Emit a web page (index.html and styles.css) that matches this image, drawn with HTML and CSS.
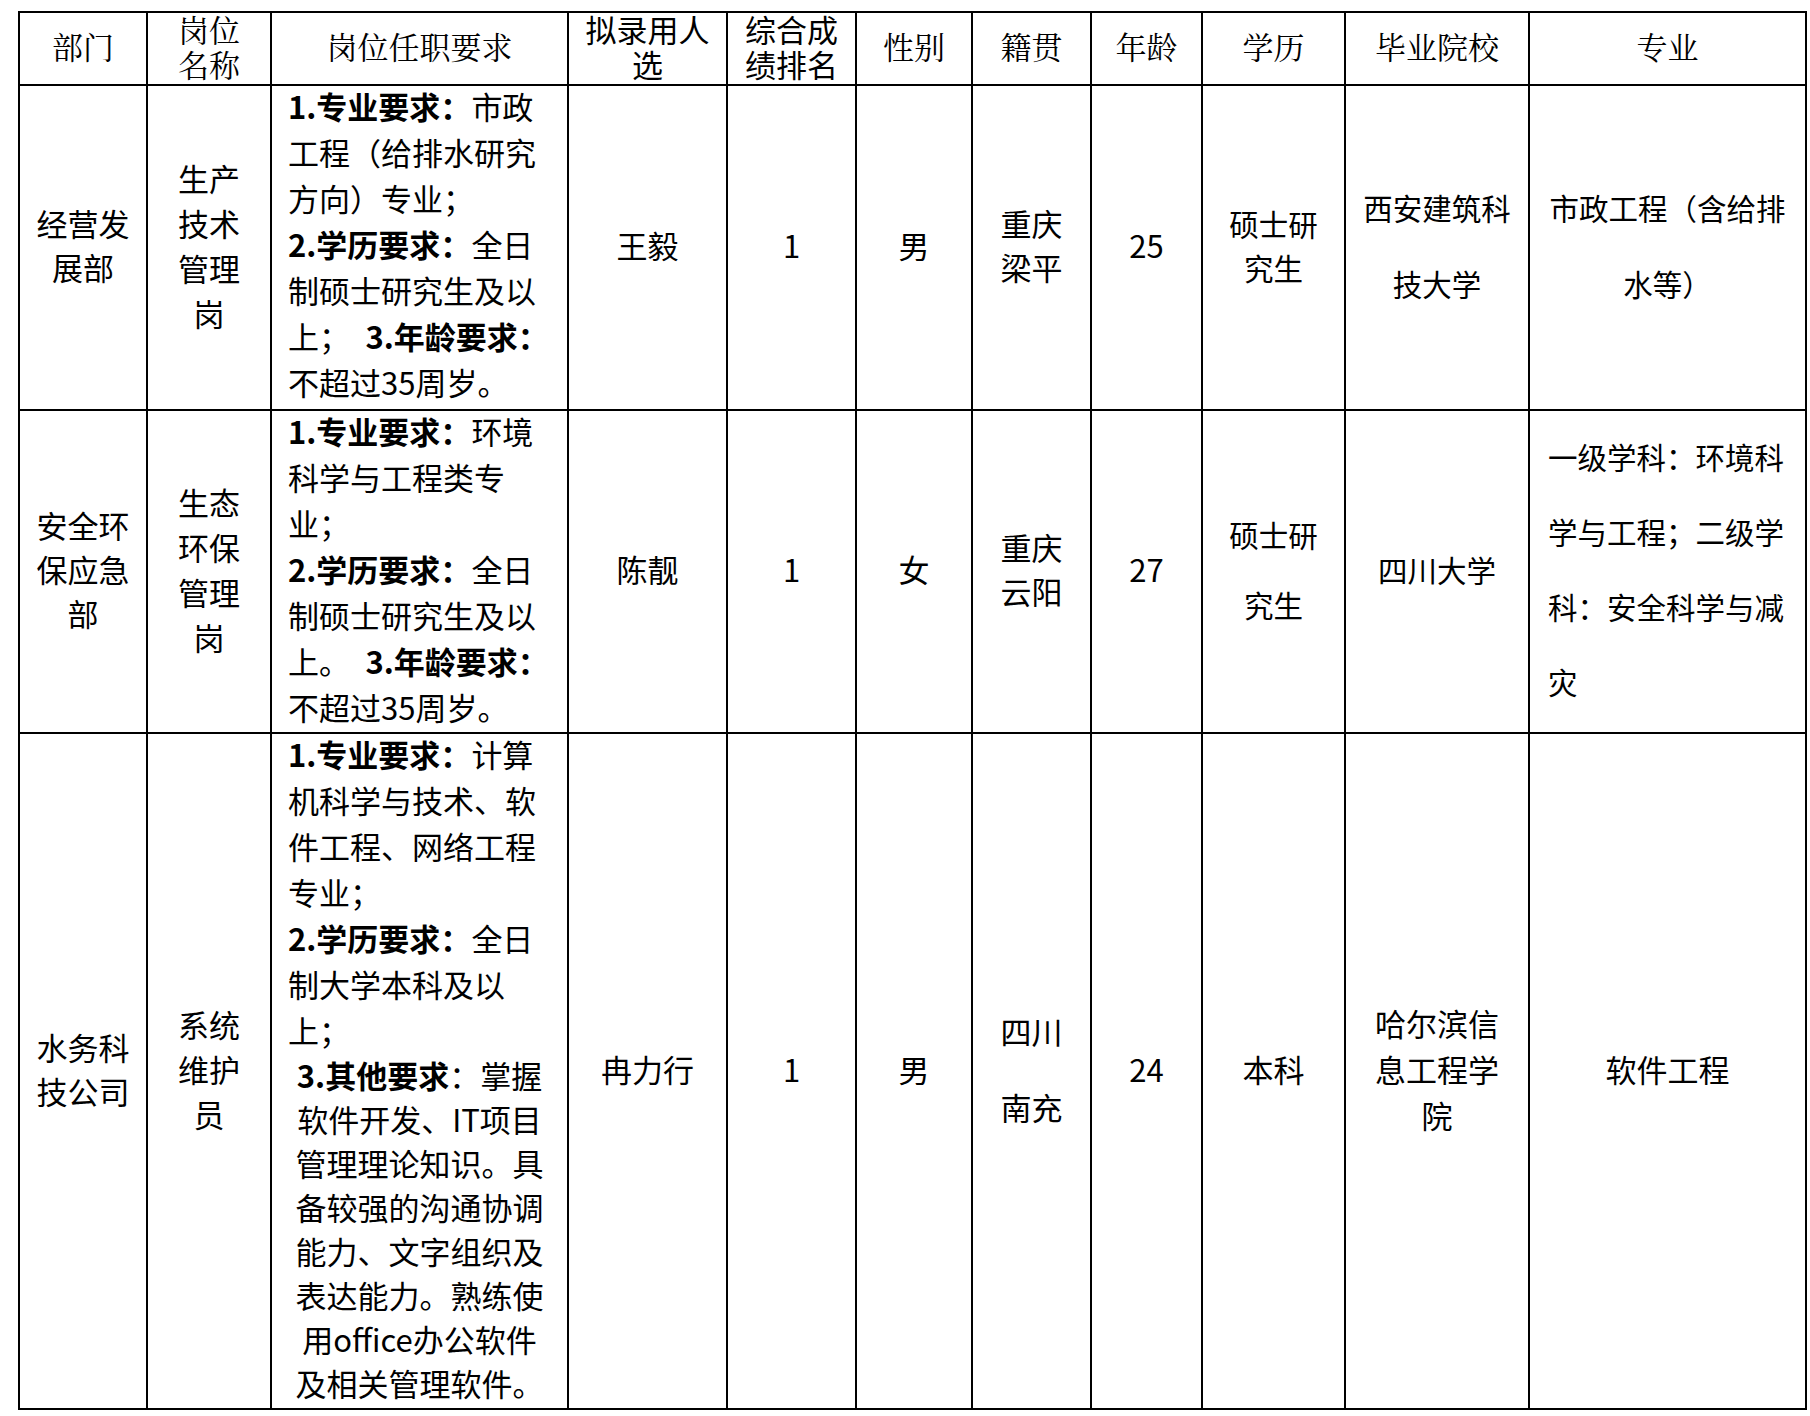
FILE: index.html
```html
<!DOCTYPE html>
<html lang="zh-CN">
<head>
<meta charset="utf-8">
<title>拟录用人员公示</title>
<link rel="stylesheet" href="styles.css">
</head>
<body>
<table class="grid">
  <colgroup>
    <col class="w-dept">
    <col class="w-post">
    <col class="w-req">
    <col class="w-name">
    <col class="w-rank">
    <col class="w-sex">
    <col class="w-origin">
    <col class="w-age">
    <col class="w-edu">
    <col class="w-school">
    <col class="w-major">
  </colgroup>
  <thead>
    <tr class="row-head">
      <th><span class="hd">部门</span></th>
      <th><span class="hd">岗位<br>名称</span></th>
      <th><span class="hd">岗位任职要求</span></th>
      <th class="hd-sans"><span class="hd">拟录用人<br>选</span></th>
      <th class="hd-sans"><span class="hd">综合成<br>绩排名</span></th>
      <th><span class="hd">性别</span></th>
      <th><span class="hd">籍贯</span></th>
      <th><span class="hd">年龄</span></th>
      <th><span class="hd">学历</span></th>
      <th><span class="hd">毕业院校</span></th>
      <th><span class="hd">专业</span></th>
    </tr>
  </thead>
  <tbody>
    <tr class="row-1">
      <td>经营发<br>展部</td>
      <td class="post">生产<br>技术<br>管理<br>岗</td>
      <td class="req"><p class="req-left"><b>1.专业要求：</b>市政<br>工程（给排水研究<br>方向）专业；<br><b>2.学历要求：</b>全日<br>制硕士研究生及以<br>上；&ensp;<b>3.年龄要求：</b><br>不超过35周岁。</p></td>
      <td>王毅</td>
      <td>1</td>
      <td>男</td>
      <td>重庆<br>梁平</td>
      <td>25</td>
      <td class="sm">硕士研<br>究生</td>
      <td class="sm lh-wide">西安建筑科<br>技大学</td>
      <td class="sm lh-wide">市政工程（含给排<br>水等）</td>
    </tr>
    <tr class="row-2">
      <td>安全环<br>保应急<br>部</td>
      <td class="post">生态<br>环保<br>管理<br>岗</td>
      <td class="req"><p class="req-left"><b>1.专业要求：</b>环境<br>科学与工程类专<br>业；<br><b>2.学历要求：</b>全日<br>制硕士研究生及以<br>上。&ensp;<b>3.年龄要求：</b><br>不超过35周岁。</p></td>
      <td>陈靓</td>
      <td>1</td>
      <td>女</td>
      <td>重庆<br>云阳</td>
      <td>27</td>
      <td class="sm lh-mid">硕士研<br>究生</td>
      <td class="sm">四川大学</td>
      <td class="sm lh-major left">一级学科：环境科<br>学与工程；二级学<br>科：安全科学与减<br>灾</td>
    </tr>
    <tr class="row-3">
      <td>水务科<br>技公司</td>
      <td class="post">系统<br>维护<br>员</td>
      <td class="req"><p class="req-left"><b>1.专业要求：</b>计算<br>机科学与技术、软<br>件工程、网络工程<br>专业；<br><b>2.学历要求：</b>全日<br>制大学本科及以<br>上；</p><p class="req-center"><b>3.其他要求</b>：掌握<br>软件开发、IT项目<br>管理理论知识。具<br>备较强的沟通协调<br>能力、文字组织及<br>表达能力。熟练使<br>用office办公软件<br>及相关管理软件。</p></td>
      <td>冉力行</td>
      <td>1</td>
      <td>男</td>
      <td class="lh-wide">四川<br>南充</td>
      <td>24</td>
      <td>本科</td>
      <td class="lh-school">哈尔滨信<br>息工程学<br>院</td>
      <td>软件工程</td>
    </tr>
  </tbody>
</table>
</body>
</html>
```

FILE: styles.css
```css
html, body {
  background: #ffffff;
}

body {
  margin: 0;
  padding: 11px 0 0 18px;
  color: #000000;
  font-family: "Noto Sans CJK SC", "Noto Sans", sans-serif;
}

.grid {
  border-collapse: collapse;
  table-layout: fixed;
  width: 1787px;
}

.w-dept { width: 128px; }
.w-post { width: 124px; }
.w-req { width: 297px; }
.w-name { width: 159px; }
.w-rank { width: 129px; }
.w-sex { width: 116px; }
.w-origin { width: 119px; }
.w-age { width: 111px; }
.w-edu { width: 143px; }
.w-school { width: 184px; }
.w-major { width: 277px; }

.grid th,
.grid td {
  border: 2px solid #000000;
  padding: 0 6px 5px;
  text-align: center;
  vertical-align: middle;
  white-space: nowrap;
}

.grid th {
  font-family: "Noto Serif CJK SC", "Source Han Serif SC", "Noto Sans CJK SC", serif;
  font-weight: normal;
  font-size: 31px;
  line-height: 35px;
  padding: 0 4px;
}

.grid th.hd-sans {
  font-family: "Noto Sans CJK SC", sans-serif;
}

.hd {
  display: block;
  margin-top: -3px;
  margin-bottom: 3px;
}

.grid td {
  font-size: 31px;
  line-height: 44px;
}

.grid td.sm {
  font-size: 29.5px;
}

.row-head { height: 73px; }
.row-1 { height: 325px; }
.row-2 { height: 323px; }
.row-3 { height: 676px; }

.grid td.post {
  line-height: 45px;
}

.grid td.req {
  padding: 0 16px;
  vertical-align: top;
}

.req-left,
.req-center {
  margin: 0;
}

.req-left {
  margin-top: -3px;
  text-align: left;
  line-height: 46px;
}

.req-center {
  text-align: center;
  line-height: 44px;
}

.req b {
  font-weight: bold;
}

.grid td.lh-wide {
  line-height: 76px;
}

.grid td.lh-mid {
  line-height: 70px;
}

.grid td.lh-school {
  line-height: 46px;
}

.grid td.lh-major {
  line-height: 75px;
}

.grid td.left {
  text-align: left;
  padding-left: 18px;
}
```
